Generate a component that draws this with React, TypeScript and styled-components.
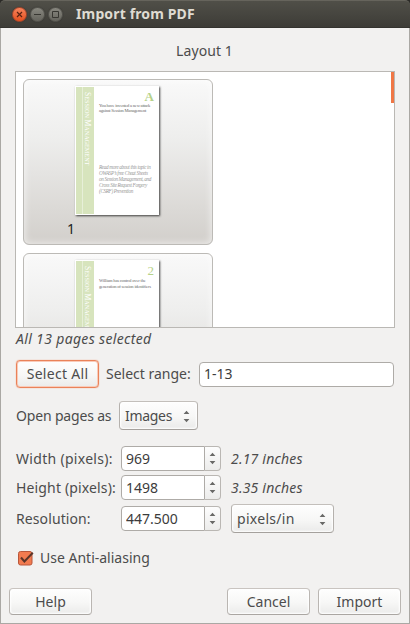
import React from "react";
import styled, { createGlobalStyle, css } from "styled-components";

const Global = createGlobalStyle`
  * { box-sizing: border-box; }
  html, body { margin: 0; padding: 0; background: #2b2a27; }
  body, input, button { font-family: "Noto Sans", "Open Sans", sans-serif; font-size: 14px; color: #4c4c4c; }
`;

const Window = styled.div`
  width: 410px;
  height: 624px;
  display: flex;
  flex-direction: column;
  overflow: hidden;
`;

const TitleBar = styled.header`
  height: 28px;
  flex: none;
  display: flex;
  align-items: center;
  gap: 3px;
  padding: 0 0 0 12px;
  border-radius: 5px 5px 0 0;
  border-top: 1px solid #66645c;
  border-bottom: 1px solid #34332f;
  background: linear-gradient(#504f48, #3d3c37);
`;

const Title = styled.h1`
  margin: 0 0 0 10px;
  font-size: 14px;
  line-height: 20px;
  font-weight: 700;
  color: #dfdbd2;
  letter-spacing: 0.14px;
`;

const WindowButton = styled.span<{ $close?: boolean }>`
  width: 15px;
  height: 15px;
  border-radius: 50%;
  display: flex;
  border: 1px solid ${(p) => (p.$close ? "#a8462a" : "#55544e")};
  background: ${(p) => (p.$close ? "linear-gradient(#f5835c, #e5501f)" : "linear-gradient(#88877f, #65645d)")};
  box-shadow: 0 0 1px #2d2c29;
  svg { display: block; width: 13px; height: 13px; }
`;

const Body = styled.main`
  flex: 1;
  min-height: 0;
  display: flex;
  flex-direction: column;
  align-items: flex-start;
  padding: 0 0 0 14px;
  background: #f2f1f0;
  border: 1px solid #aaa8a4;
  border-top: 0;
`;

const Text = styled.span<{ $ls?: number; $italic?: boolean }>`
  line-height: 20px;
  white-space: nowrap;
  letter-spacing: ${(p) => p.$ls ?? 0}px;
  font-style: ${(p) => (p.$italic ? "italic" : "normal")};
`;

const LayoutHeading = styled.div`
  width: 379px;
  height: 43px;
  padding-top: 13px;
  display: flex;
  justify-content: center;
`;

const PageList = styled.section`
  width: 380px;
  height: 257px;
  flex: none;
  display: flex;
  justify-content: space-between;
  overflow: hidden;
  background: #fff;
  border: 1px solid #bab8b4;
`;

const Cards = styled.div`
  display: flex;
  flex-direction: column;
  gap: 8px;
  padding: 7px;
`;

const ScrollThumb = styled.div`
  width: 3px;
  height: 31px;
  background: #f07746;
`;

const PageCard = styled.article`
  width: 190px;
  height: 166px;
  flex: none;
  padding: 6px 0 0 44px;
  border: 1px solid #bcbab6;
  border-radius: 6px;
  background: linear-gradient(#f9f9f9, #eeeeed 35%, #d2cfcb);
  box-shadow: inset 0 0 7px 1px rgba(255, 255, 255, 0.6);
`;

const PageNumber = styled.div`
  margin-top: 4px;
  margin-left: -1px;
  line-height: 20px;
  color: #222;
`;

const Sheet = styled.div`
  width: 84px;
  height: 129px;
  margin-left: 7px;
  display: flex;
  padding: 1px;
  background: #fff;
  box-shadow: 1px 1px 2px rgba(0, 0, 0, 0.72);
  font-family: "Liberation Serif", serif;
`;

const Spine = styled.div`
  width: 18px;
  flex: none;
  display: flex;
  align-items: flex-start;
  padding: 5px 3px 0 0;
  background: linear-gradient(90deg, #d7e4bd 6px, #e7efd8 6px, #e7efd8 7px, #d7e4bd 7px);
  writing-mode: vertical-rl;
  font-size: 7.6px;
  line-height: 8px;
  color: #fff;
  white-space: nowrap;
  small { font-size: 6.2px; }
`;

const SheetBody = styled.div`
  flex: 1;
  min-width: 0;
  display: flex;
  flex-direction: column;
  padding: 3px 4px 0 5px;
`;

const Rank = styled.div<{ $bold?: boolean }>`
  align-self: flex-end;
  height: 14px;
  font-size: 13px;
  line-height: 13px;
  font-weight: ${(p) => (p.$bold ? 700 : 400)};
  color: #b6d28a;
`;

const Copy = styled.div<{ $note?: boolean; $ls?: number; $lh?: number }>`
  font-size: ${(p) => (p.$note ? 5.2 : 4.5)}px;
  line-height: ${(p) => p.$lh ?? 4.5}px;
  letter-spacing: ${(p) => p.$ls ?? 0}px;
  color: #666;
  white-space: nowrap;
  ${(p) => p.$note && css`
    margin-top: 51px;
    font-style: italic;
    color: #999;
  `}
`;

const Row = styled.div<{ $h: number; $mt: number; $gap?: number }>`
  height: ${(p) => p.$h}px;
  margin: ${(p) => p.$mt}px 0 0 1px;
  flex: none;
  display: flex;
  align-items: center;
  gap: ${(p) => p.$gap ?? 0}px;
`;

const Label = styled(Text)<{ $w: number }>`
  width: ${(p) => p.$w}px;
  flex: none;
`;

const Button = styled.button<{ $focus?: boolean; $ls?: number }>`
  width: 83px;
  height: ${(p) => (p.$focus ? 28 : 27)}px;
  flex: none;
  padding: ${(p) => (p.$focus ? "0 0 1px" : "1px 0 0")};
  line-height: 20px;
  letter-spacing: ${(p) => p.$ls ?? 0}px;
  border: 1px solid;
  border-color: ${(p) => (p.$focus ? "#ea8259" : "#c9c4c0 #bab6b2 #aaa6a2")};
  border-radius: 4px;
  background: linear-gradient(#fefefe, #f7f7f6 55%, #ebebea);
  box-shadow: ${(p) => (p.$focus ? "0 0 1px #f07746, inset 0 0 0 1px #f9cbb9" : "inset 0 0 2px 1px #fff")};
  white-space: nowrap;
`;

const Entry = styled.input<{ $w: number; $joined?: boolean }>`
  width: ${(p) => p.$w}px;
  height: 25px;
  padding: 0 0 1px 4px;
  outline: 0;
  color: #3c3c3c;
  background: #fff;
  border: 1px solid #aeaba7;
  border-radius: ${(p) => (p.$joined ? "4px 0 0 4px" : "4px")};
`;

const SpinBox = styled.div`
  display: flex;
  width: 110px;
`;

const Stepper = styled.div`
  width: 16px;
  height: 25px;
  display: flex;
  align-items: center;
  justify-content: center;
  border: 1px solid #bab7b3;
  border-left: 0;
  border-radius: 0 4px 4px 0;
  background: linear-gradient(#fdfdfd, #ececeb);
`;

const Combo = styled.button<{ $w: number; $ls?: number }>`
  width: ${(p) => p.$w}px;
  height: 29px;
  display: flex;
  align-items: center;
  justify-content: space-between;
  padding: 0 7px 0 5px;
  line-height: 20px;
  letter-spacing: ${(p) => p.$ls ?? 0}px;
  border: 1px solid;
  border-color: #c3bfbb #b5b1ad #a5a19d;
  border-radius: 4px;
  background: linear-gradient(#fefefe, #f7f7f6 55%, #eaeae9);
  box-shadow: inset 0 0 2px 1px #fff;
  svg { margin-top: 2px; }
`;

const Footer = styled.footer`
  display: flex;
  width: 392px;
  margin: 20px 0 0 -6px;
  gap: 8px;
  button:first-child { margin-right: auto; }
`;

const Arrows = () => (
  <svg width="7" height="13" viewBox="0 0 7 13" fill="#696967">
    <path d="M3.5 .8 6.4 4H.6zM3.5 12.2 6.4 9H.6z" />
  </svg>
);

const Spin = ({ value }: { value: string }) => (
  <SpinBox>
    <Entry $w={84} $joined defaultValue={value} />
    <Stepper><Arrows /></Stepper>
  </SpinBox>
);

const SpineTitle = () => (
  <Spine>
    <span>S<small>ESSION </small>M<small>ANAGEMENT</small></span>
  </Spine>
);

export default function App() {
  return (
    <>
      <Global />
      <Window>
        <TitleBar>
          <WindowButton $close>
            <svg viewBox="0 0 13 13" stroke="#5a2212" strokeWidth="1.2"><path d="m4 4 5 5M9 4 4 9" /></svg>
          </WindowButton>
          <WindowButton>
            <svg viewBox="0 0 13 13" stroke="#383732"><path d="M3 6.5h7" /></svg>
          </WindowButton>
          <WindowButton>
            <svg viewBox="0 0 13 13" stroke="#383732" fill="none"><path d="M3.5 3.5h6v6h-6z" /></svg>
          </WindowButton>
          <Title>Import from PDF</Title>
        </TitleBar>
        <Body>
          <LayoutHeading><Text $ls={0.1}>Layout 1</Text></LayoutHeading>
          <PageList>
            <Cards>
              <PageCard>
                <Sheet>
                  <SpineTitle />
                  <SheetBody>
                    <Rank $bold>A</Rank>
                    <Copy $ls={-0.2}>You have invented a new attack<br />against Session Management</Copy>
                    <Copy $note $lh={6} $ls={-0.34}>
                      Read more about this topic in<br />OWASP’s free Cheat Sheets<br />on Session Management, and<br />Cross Site Request Forgery<br />(CSRF) Prevention
                    </Copy>
                  </SheetBody>
                </Sheet>
                <PageNumber>1</PageNumber>
              </PageCard>
              <PageCard>
                <Sheet>
                  <SpineTitle />
                  <SheetBody>
                    <Rank>2</Rank>
                    <Copy $lh={5.5} $ls={-0.17}>William has control over the<br />generation of session identifiers</Copy>
                  </SheetBody>
                </Sheet>
              </PageCard>
            </Cards>
            <ScrollThumb />
          </PageList>
          <Row $h={20} $mt={1}><Text $italic $ls={0.34}>All 13 pages selected</Text></Row>
          <Row $h={28} $mt={11} $gap={7}>
            <Button $focus $ls={0.3}>Select All</Button>
            <Label $w={86}>Select range:</Label>
            <Entry $w={195} defaultValue="1-13" />
          </Row>
          <Row $h={29} $mt={13}>
            <Label $w={103} $ls={-0.17}>Open pages as</Label>
            <Combo $w={79} $ls={-0.3}>Images<Arrows /></Combo>
          </Row>
          <Row $h={25} $mt={16}>
            <Label $w={105} $ls={0.3}>Width (pixels):</Label>
            <Spin value="969" />
            <Text $italic $ls={0.2}>2.17 inches</Text>
          </Row>
          <Row $h={25} $mt={4}>
            <Label $w={105} $ls={0.15}>Height (pixels):</Label>
            <Spin value="1498" />
            <Text $italic $ls={0.2}>3.35 inches</Text>
          </Row>
          <Row $h={29} $mt={4}>
            <Label $w={105} $ls={0.1}>Resolution:</Label>
            <Spin value="447.500" />
            <Combo $w={103} $ls={0.3}>pixels/in<Arrows /></Combo>
          </Row>
          <Row $h={20} $mt={15} $gap={5}>
            <svg width="19" height="17" viewBox="0 0 19 17">
              <rect x="2.5" y="1.5" width="13.5" height="13.5" rx="2" fill="#f27b50" stroke="#b9573b" />
              <path d="m5 7.5 3.4 4L16.8 2.8" fill="none" stroke="#5b3529" strokeWidth="2" />
            </svg>
            <Text>Use Anti-aliasing</Text>
          </Row>
          <Footer>
            <Button>Help</Button>
            <Button>Cancel</Button>
            <Button>Import</Button>
          </Footer>
        </Body>
      </Window>
    </>
  );
}
